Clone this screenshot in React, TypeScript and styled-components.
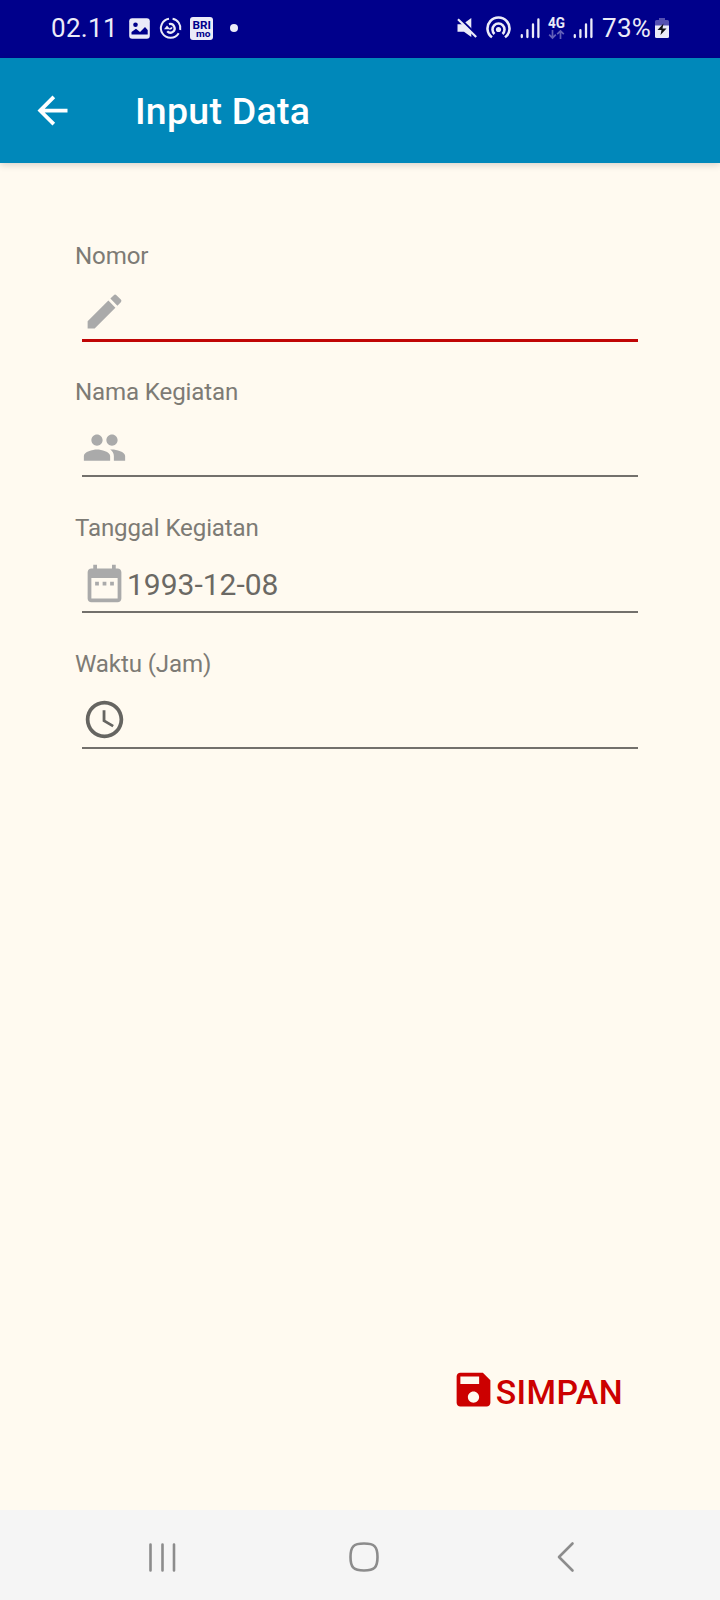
import React from "react";
import styled, { createGlobalStyle } from "styled-components";

const GlobalStyle = createGlobalStyle`
  * { box-sizing: border-box; }
  body { margin: 0; background: #fffaf0; font-family: Roboto, "Noto Sans", sans-serif; }
`;

const Screen = styled.div`
  width: 720px;
  height: 1600px;
  display: flex;
  flex-direction: column;
  background: #fffaf0;
`;

const StatusBar = styled.div`
  height: 58px;
  flex: none;
  display: flex;
  justify-content: space-between;
  padding: 0 51px 0 51px;
  background: #00008b;
  color: #ebebf8;
`;

const StatusGroup = styled.div`
  display: flex;
  align-items: flex-start;
  padding-top: 16px;
`;

const StatusText = styled.span<{ $width: number; $gap?: number }>`
  width: ${(p) => p.$width}px;
  margin-left: ${(p) => p.$gap ?? 0}px;
  font-size: 26px;
  line-height: 24px;
  letter-spacing: 0.3px;
  white-space: nowrap;
`;

const StatusIcon = styled.svg<{ $gap: number }>`
  flex: none;
  display: block;
  overflow: visible;
  margin-left: ${(p) => p.$gap}px;
`;

const AppBar = styled.header`
  height: 105px;
  flex: none;
  display: flex;
  align-items: center;
  padding-left: 30px;
  background: #0088ba;
  color: #fff;
  box-shadow: 0 2px 7px rgba(0, 0, 0, 0.16);
`;

const BackButton = styled.button`
  width: 45px;
  height: 45px;
  padding: 0;
  border: 0;
  background: none;
  color: inherit;
`;

const Title = styled.h1`
  margin: 1px 0 0 60px;
  font-size: 37.5px;
  line-height: 44px;
  font-weight: 500;
  letter-spacing: 0.25px;
`;

const Icon = styled.svg`
  display: block;
  flex: none;
  width: 45px;
  height: 45px;
  fill: currentColor;
`;

const Form = styled.main`
  flex: 1;
  display: flex;
  flex-direction: column;
  padding: 79px 82px 98px 75px;
`;

const Field = styled.label`
  height: 136px;
  display: flex;
  flex-direction: column;
`;

const FieldLabel = styled.span`
  height: 28px;
  font-size: 24.1px;
  line-height: 28px;
  letter-spacing: -0.13px;
  color: #7d7b75;
`;

const FieldRow = styled.span<{ $active?: boolean }>`
  height: ${(p) => (p.$active ? 72 : 71)}px;
  margin-left: 7px;
  padding-top: 18.6px;
  display: flex;
  align-items: flex-start;
  border-bottom: ${(p) => (p.$active ? "3.4px solid #c00505" : "2px solid #73706c")};
`;

const FieldIcon = styled(Icon)<{ $color: string }>`
  color: ${(p) => p.$color};
`;

const FieldInput = styled.input`
  flex: 1;
  min-width: 0;
  height: 47px;
  padding: 0;
  border: 0;
  outline: 0;
  background: transparent;
  font: 30px Roboto, "Noto Sans", sans-serif;
  color: #6b6964;
`;

const SaveButton = styled.button`
  margin: auto 15px 0 0;
  align-self: flex-end;
  display: flex;
  align-items: center;
  padding: 0;
  border: 0;
  background: none;
  color: #cc0000;
  font: 500 33.75px/45px Roboto, "Noto Sans", sans-serif;
  letter-spacing: 0.4px;
`;

const SaveLabel = styled.span`
  padding-top: 3px;
  margin-bottom: -3px;
`;

const NavBar = styled.nav`
  height: 90px;
  flex: none;
  display: flex;
  align-items: center;
  padding: 4px 0 0 147px;
  background: #f5f5f5;
`;

const NavIcon = styled.svg<{ $gap?: number }>`
  display: block;
  margin-left: ${(p) => p.$gap ?? 0}px;
  fill: none;
  stroke: #8c8c8c;
  stroke-width: 2.6px;
  stroke-linecap: round;
  stroke-linejoin: round;
`;

const BadgeText = styled.text<{ $size: number }>`
  font: 700 ${(p) => p.$size}px Roboto, sans-serif;
`;

const paths = {
  back: "M20 11H7.83l5.59-5.59L12 4l-8 8 8 8 1.41-1.41L7.83 13H20v-2z",
  edit: "M3 17.25V21h3.75L17.81 9.94l-3.75-3.75L3 17.25zM20.71 7.04c.39-.39.39-1.02 0-1.41l-2.34-2.34c-.39-.39-1.02-.39-1.41 0l-1.83 1.83 3.75 3.75 1.83-1.83z",
  people:
    "M16 11c1.66 0 2.99-1.34 2.99-3S17.66 5 16 5s-3 1.34-3 3 1.34 3 3 3zm-8 0c1.66 0 2.99-1.34 2.99-3S9.66 5 8 5 5 6.34 5 8s1.34 3 3 3zm0 2c-2.33 0-7 1.17-7 3.5V19h14v-2.5c0-2.33-4.67-3.5-7-3.5zm8 0c-.29 0-.62.02-.97.05 1.16.84 1.97 1.97 1.97 3.45V19h6v-2.5c0-2.33-4.67-3.5-7-3.5z",
  date: "M9 11H7v2h2v-2zm4 0h-2v2h2v-2zm4 0h-2v2h2v-2zm2-7h-1V2h-2v2H8V2H6v2H5c-1.11 0-1.99.9-1.99 2L3 20c0 1.1.89 2 2 2h14c1.1 0 2-.9 2-2V6c0-1.1-.9-2-2-2zm0 16H5V9h14v11z",
  clock:
    "M11.99 2C6.47 2 2 6.48 2 12s4.47 10 9.99 10C17.52 22 22 17.52 22 12S17.52 2 11.99 2zM12 20c-4.42 0-8-3.58-8-8s3.58-8 8-8 8 3.58 8 8-3.58 8-8 8zm.5-13H11v6l5.25 3.15.75-1.23-4.5-2.67z",
  save: "M17 3H5c-1.11 0-2 .9-2 2v14c0 1.1.89 2 2 2h14c1.1 0 2-.9 2-2V7l-4-4zm-5 16c-1.66 0-3-1.34-3-3s1.34-3 3-3 3 1.34 3 3-1.34 3-3 3zm3-10H5V5h10v4z",
};

const fields = [
  { label: "Nomor", value: "", path: paths.edit, color: "#aaaaaa", active: true },
  { label: "Nama Kegiatan", value: "", path: paths.people, color: "#aaaaaa" },
  { label: "Tanggal Kegiatan", value: "1993-12-08", path: paths.date, color: "#aaaaaa" },
  { label: "Waktu (Jam)", value: "", path: paths.clock, color: "#666561" },
];

const Signal = ({ gap }: { gap: number }) => (
  <StatusIcon $gap={gap} width="20" height="24" viewBox="0 0 20 24" stroke="currentColor" strokeWidth="2.3" strokeLinecap="round">
    <path d="M1.8 19.2V21M7.4 14.2V21M13 8.5V21M18.4 3.5V21" />
  </StatusIcon>
);

export default function App() {
  return (
    <>
      <GlobalStyle />
      <Screen>
        <StatusBar>
          <StatusGroup>
            <StatusText $width={66}>02.11</StatusText>
            <StatusIcon $gap={12} width="21" height="24" viewBox="0 0 21 24">
              <rect x="0.2" y="2.2" width="20.6" height="20.6" rx="3" fill="currentColor" />
              <circle cx="6.5" cy="8.8" r="2.3" fill="#00008b" />
              <path d="M2.5 18.5V16l4.5-3.2 4 3.2 5-5 2.7 3v4.5z" fill="#00008b" />
            </StatusIcon>
            <StatusIcon $gap={10} width="22" height="24" viewBox="0 0 22 24" fill="none" stroke="currentColor" strokeWidth="2">
              <path d="M12.6 2.7A9.6 9.6 0 0 1 20.2 14M18.7 17.2A9.6 9.6 0 1 1 9 2.7" />
              <path d="M9 8.2A4.3 4.3 0 1 1 7.2 15.3" strokeWidth="2.3" />
              <path d="M4 13.2l3-3.600 3.200 3.600z" fill="currentColor" stroke="none" />
              <path d="M9.5 12.5a1.5 1.5 0 0 0 2.2-1.3" strokeWidth="1.6" />
            </StatusIcon>
            <StatusIcon $gap={8} width="23" height="24" viewBox="0 0 23 24">
              <rect y="1" width="23" height="23" rx="3" fill="currentColor" />
              <BadgeText $size={11} x="2.4" y="12.5" textLength="18.5" lengthAdjust="spacingAndGlyphs" fill="#00008b">BRI</BadgeText>
              <BadgeText $size={9} x="6" y="20.5" textLength="14.5" lengthAdjust="spacingAndGlyphs" fill="#00008b">mo</BadgeText>
            </StatusIcon>
            <StatusIcon $gap={17} width="8" height="24" viewBox="0 0 8 24">
              <circle cx="4" cy="12" r="4" fill="currentColor" />
            </StatusIcon>
          </StatusGroup>
          <StatusGroup>
            <StatusIcon $gap={0} width="21" height="24" viewBox="0 0 21 24">
              <path d="M0.5 8.2h5.2L14.3 2v19L7 15.8H.5z" fill="currentColor" />
              <path d="M2.2 1.9L17.5 17" stroke="#00008b" strokeWidth="2.3" />
              <path d="M1 3.2L19.2 21" stroke="currentColor" strokeWidth="2.2" />
            </StatusIcon>
            <StatusIcon $gap={8} width="25" height="24" viewBox="0 0 25 24" fill="none" stroke="currentColor" strokeWidth="2.6">
              <path d="M6 21.3A11 11 0 1 1 19 21.3M8.5 18A6 6 0 1 1 16.5 18" />
              <circle cx="12.5" cy="13.5" r="2.6" fill="currentColor" stroke="none" />
            </StatusIcon>
            <Signal gap={9.5} />
            <StatusIcon $gap={8} width="18" height="24" viewBox="0 0 18 24">
              <BadgeText $size={14.5} x="0" y="11.5" textLength="17" lengthAdjust="spacingAndGlyphs" fill="currentColor">4G</BadgeText>
              <path d="M4.5 14v8M1.2 18.7l3.3 3.3 3.3-3.3M12.5 23v-8M9.2 18.2l3.3-3.3 3.3 3.3" fill="none" stroke="#6260b8" strokeWidth="1.7" />
            </StatusIcon>
            <Signal gap={7} />
            <StatusText $width={51} $gap={9}>73%</StatusText>
            <StatusIcon $gap={2} width="14" height="24" viewBox="0 0 14 24">
              <path d="M4 2h6v2h2.5q1.5 0 1.5 1.5V10H0V5.5Q0 4 1.5 4H4z" fill="#5551b2" />
              <path d="M0 9.5h14V20.5q0 1.5-1.5 1.5h-11Q0 22 0 20.5z" fill="currentColor" />
              <path d="M8.5 7.5L2.5 14h4l-1 5 6-6.5h-4z" fill="#111116" />
            </StatusIcon>
          </StatusGroup>
        </StatusBar>
        <AppBar>
          <BackButton aria-label="Kembali">
            <Icon viewBox="0 0 24 24"><path d={paths.back} /></Icon>
          </BackButton>
          <Title>Input Data</Title>
        </AppBar>
        <Form>
          {fields.map((f) => (
            <Field key={f.label}>
              <FieldLabel>{f.label}</FieldLabel>
              <FieldRow $active={f.active}>
                <FieldIcon $color={f.color} viewBox="0 0 24 24"><path d={f.path} /></FieldIcon>
                <FieldInput defaultValue={f.value} />
              </FieldRow>
            </Field>
          ))}
          <SaveButton>
            <Icon viewBox="0 0 24 24"><path d={paths.save} /></Icon>
            <SaveLabel>SIMPAN</SaveLabel>
          </SaveButton>
        </Form>
        <NavBar>
          <NavIcon width="32" height="32" viewBox="0 0 32 32"><path d="M3.5 3.5v26M15.5 3.5v26M27 3.5v26" /></NavIcon>
          <NavIcon $gap={168.5} width="32" height="32" viewBox="0 0 32 32"><path d="M16 2.500C26.500 2.500 29.500 5.500 29.500 16S26.500 29.500 16 29.500 2.500 26.500 2.500 16 5.500 2.500 16 2.500z" /></NavIcon>
          <NavIcon $gap={176.5} width="20" height="32" viewBox="0 0 20 32"><path d="M16.5 2.500L3 16l13.500 13.500" /></NavIcon>
        </NavBar>
      </Screen>
    </>
  );
}
